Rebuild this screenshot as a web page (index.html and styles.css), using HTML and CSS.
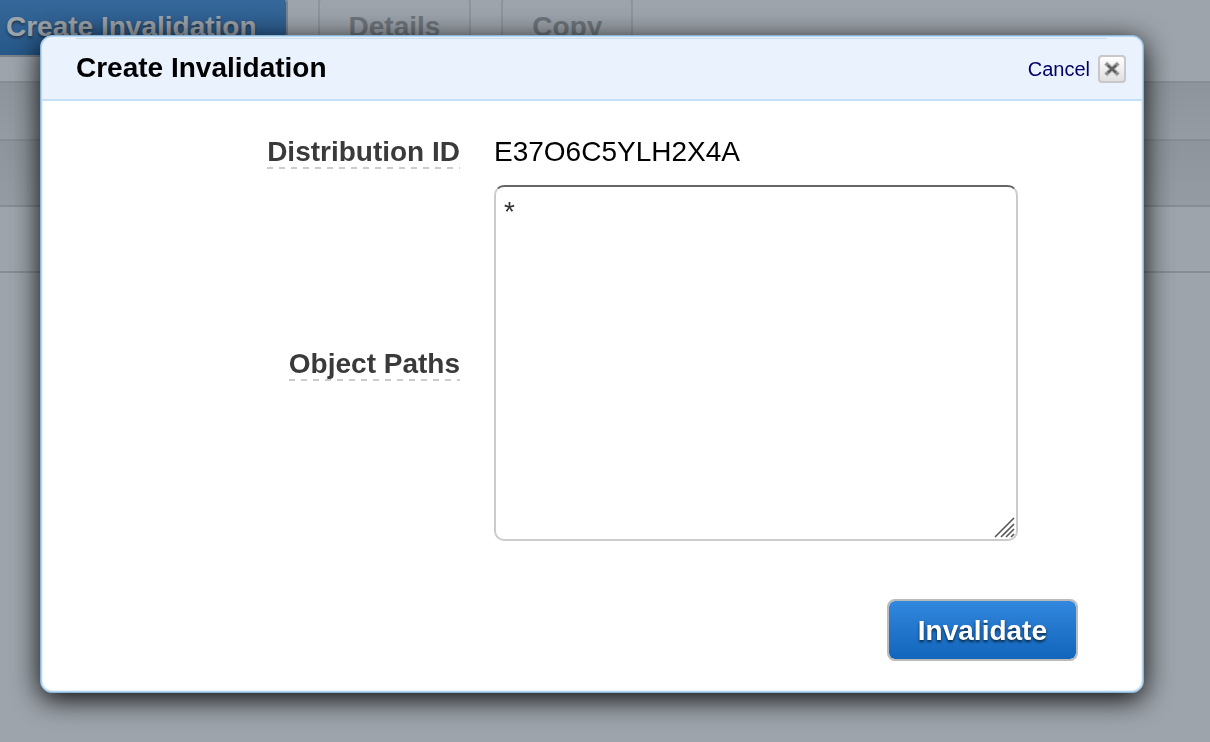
FILE: index.html
```html
<!DOCTYPE html>
<html lang="en">
<head>
  <meta charset="UTF-8">
  <meta name="viewport" content="width=device-width, initial-scale=1.0">
  <title>Create Invalidation</title>
  <link rel="stylesheet" href="styles.css">
</head>
<body>
<div class="page" inert>
  <div class="toolbar">
    <button class="button button-primary" type="button">Create Invalidation</button>
    <button class="button button-disabled" type="button" disabled>Details</button>
    <button class="button button-disabled" type="button" disabled>Copy</button>
  </div>
  <div class="list">
    <div class="list-filter"></div>
    <div class="list-head"></div>
    <div class="list-row"></div>
  </div>
</div>

<div class="overlay">
  <form class="dialog" role="dialog" aria-labelledby="dialog-title">
    <header class="dialog-header">
      <h1 class="dialog-title" id="dialog-title">Create Invalidation</h1>
      <a class="cancel" href="#">Cancel
        <span class="close-box">
          <svg width="16" height="16" viewBox="0 0 16 16" aria-hidden="true">
            <path d="M1.5 2L14.5 14M14.5 2L1.5 14" stroke="#c4c4c4" stroke-width="4.6" />
            <path d="M2 2.5L14 13.5M14 2.5L2 13.5" stroke="#8a8a8a" stroke-width="3" />
            <path d="M4 4.5L12 11.5M12 4.5L4 11.5" stroke="#5c5c5c" stroke-width="2" />
          </svg>
        </span>
      </a>
    </header>

    <div class="dialog-body">
      <div class="fields">
        <label class="field-label" for="distribution">Distribution ID</label>
        <output class="field-value" id="distribution">E37O6C5YLH2X4A</output>
        <label class="field-label" for="paths">Object Paths</label>
        <div class="paths-box">
          <textarea class="paths" id="paths">*</textarea>
          <svg class="grip" width="21" height="21" viewBox="0 0 21 21" aria-hidden="true">
            <path d="M1 20L20 1M7 20L20 7M12 20L20 12M17 20L20 17" stroke="#555" stroke-width="1.6" />
          </svg>
        </div>
      </div>
      <div class="actions">
        <button class="button button-primary" type="button">Invalidate</button>
      </div>
    </div>
  </form>
</div>
</body>
</html>
```
FILE: styles.css
```css
* {
  box-sizing: border-box;
}
body {
  margin: 0;
  background: #fff;
  font-family: "Liberation Sans", Arial, sans-serif;
  font-size: 28px;
  line-height: 30px;
}

/* Buttons */
.button {
  padding: 15px 29px 13px;
  border: 2px solid #bbb;
  border-radius: 8px;
  font: inherit;
  font-weight: bold;
  white-space: nowrap;
}
.button-primary {
  background: linear-gradient(#3287de, #1166bb) padding-box;
  color: #fff;
  text-shadow: 0 2px 3px rgba(0, 0, 0, 0.7);
}
.button-disabled {
  border-color: #dedede;
  background: linear-gradient(#fff, #f6f6f6);
  color: #a0a0a0;
}

/* Page behind the dialog */
.page {
  height: 100vh;
  overflow: hidden;
}
.toolbar {
  display: flex;
  gap: 30px;
  margin: -5px 0 24px -25px; /* scrolled partly out of view */
}
.list {
  border-top: 2px solid #d0d0d0;
}
.list-filter,
.list-head,
.list-row {
  border-bottom: 2px solid #d0d0d0;
}
.list-filter {
  height: 58px;
  background: linear-gradient(#dfdfdf, #ededed);
}
.list-head {
  height: 66px;
  background: linear-gradient(#dfdfdf, #ededed);
}
.list-row {
  height: 66px;
}

/* Dialog */
.overlay {
  position: fixed;
  inset: 0;
  padding: 35px 66px 0 40px;
  background: rgba(59, 73, 87, 0.5);
}
.dialog {
  padding: 2px 1px 1px;
  border: 1px solid #8ab4d8;
  border-radius: 12px;
  background: #fff;
  box-shadow: inset 0 0 0 1px #b9d9f3, inset 0 0 0 2px #e6f1fb, 0 6px 28px rgba(0, 0, 0, 0.95);
}
.dialog-header {
  display: flex;
  justify-content: space-between;
  align-items: center;
  height: 63px;
  padding: 0 16px 0 34px;
  border-bottom: 2px solid #c5dff5;
  border-radius: 10px 10px 0 0;
  background: linear-gradient(#cddceb, #cddceb) 34px 0 / calc(100% - 69px) 1px no-repeat #eaf2fe;
}
.dialog-title {
  margin: 0;
  padding-bottom: 2px;
  font-size: 28px;
}
.cancel {
  display: flex;
  align-items: center;
  gap: 8px;
  color: #000066;
  font-size: 20px;
  text-decoration: none;
}
.close-box {
  display: flex;
  justify-content: center;
  align-items: center;
  width: 28px;
  height: 28px;
  border: 2px solid #c8c8c8;
  border-radius: 4px;
  background: linear-gradient(#fff, #e0e0e0);
}
.dialog-body {
  padding: 32px 0 30px;
}
.fields {
  display: grid;
  grid-template-columns: 38% 1fr;
  gap: 16px 34px;
  align-items: center;
}
.field-label,
.field-value {
  padding: 4px 0 2px;
}
.field-label {
  justify-self: end;
  background: repeating-linear-gradient(90deg, #ccc 0 6px, transparent 6px 12px) 0 100% / 100% 2px no-repeat;
  color: #3a3a3a;
  font-weight: bold;
}
.paths-box {
  position: relative;
  width: 524px;
}
.paths {
  display: block;
  width: 100%;
  height: 356px;
  padding: 10px 8px;
  border: 2px solid #ccc;
  border-top-color: #666;
  border-radius: 10px;
  outline: none;
  resize: none;
  color: #333;
  font: inherit;
}
.grip {
  position: absolute;
  right: 3px;
  bottom: 3px;
}
.actions {
  display: flex;
  justify-content: flex-end;
  margin-top: 58px;
  padding-right: 64px;
}
```
